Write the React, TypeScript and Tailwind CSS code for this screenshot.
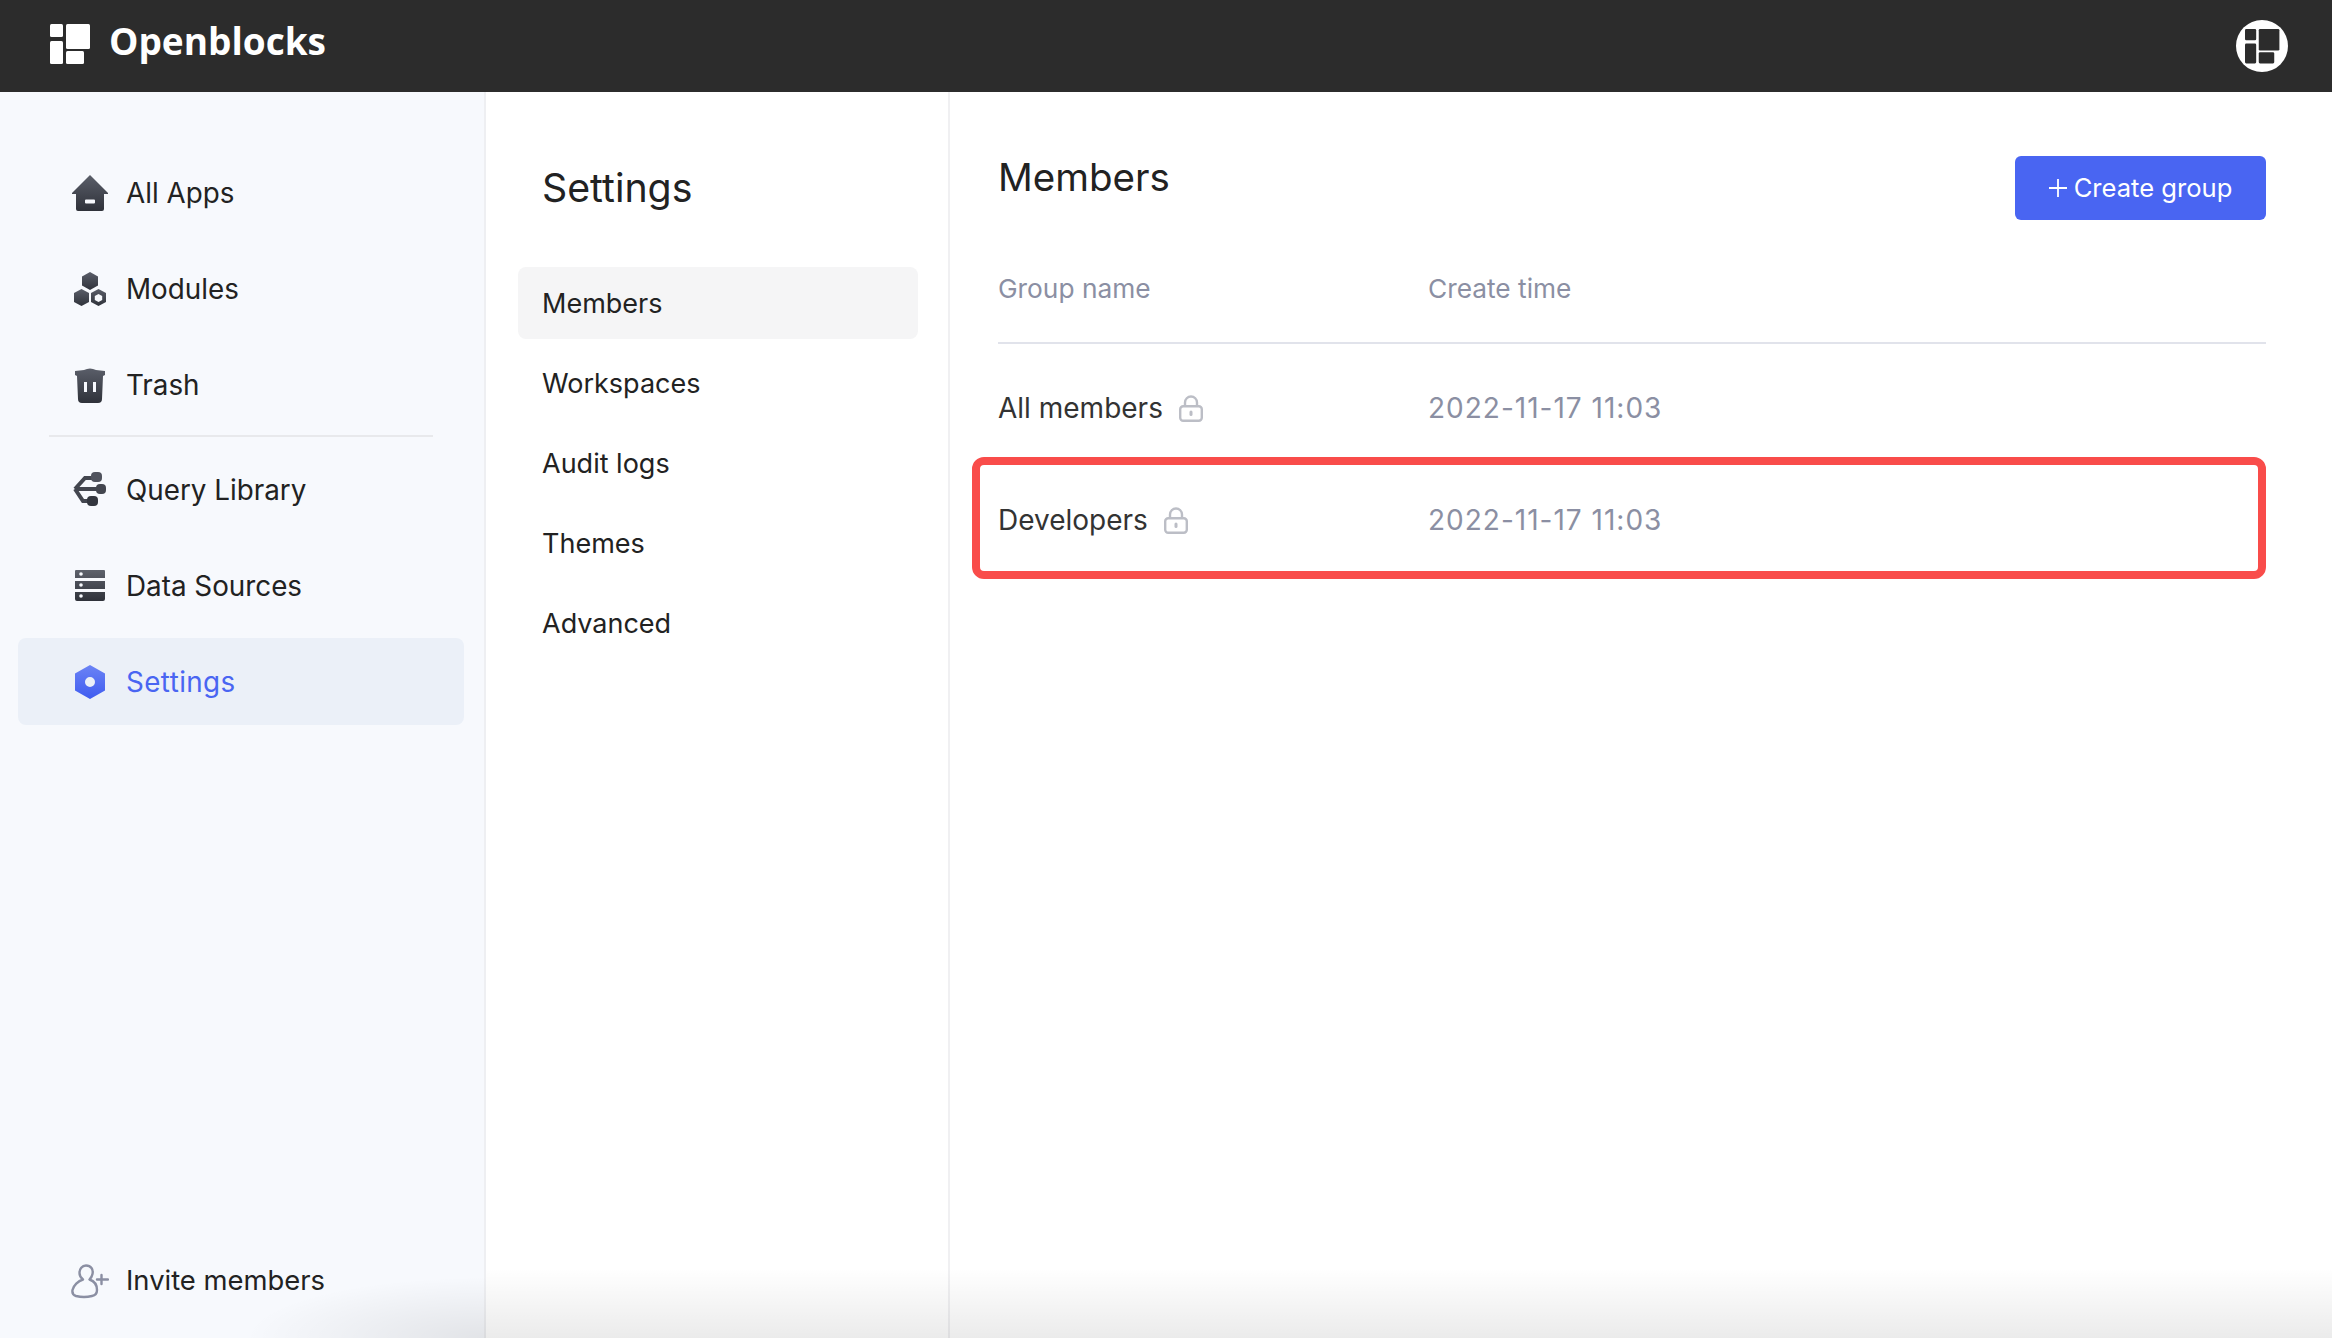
import React from 'react';

const sans = "font-['Inter',sans-serif]";

// Logo shape shared by the header brand and the avatar
const LogoBlocks = ({ fill }: { fill: string }) => (
  <>
    <rect x="0" y="0" width="13" height="13" rx="1.5" fill={fill} />
    <rect x="0" y="17" width="13" height="23" rx="1.5" fill={fill} />
    <rect x="16" y="0" width="24" height="25" rx="1.5" fill={fill} />
    <rect x="16" y="27" width="18" height="13" rx="1.5" fill={fill} />
  </>
);

const IconGradient = ({ id, from, to }: { id: string; from: string; to: string }) => (
  <defs>
    <linearGradient id={id} x1="0" y1="0" x2="0" y2="1">
      <stop offset="0" stopColor={from} />
      <stop offset="1" stopColor={to} />
    </linearGradient>
  </defs>
);

const HomeIcon = () => (
  <svg viewBox="0 0 36 36" className="w-9 h-9">
    <IconGradient id="g-home" from="#5a5e69" to="#2f323a" />
    <path
      fill="url(#g-home)"
      fillRule="evenodd"
      d="M18 0 L36 18 L36 19 L32 19 L32 34 Q32 36 30 36 L6 36 Q4 36 4 34 L4 19 L0 19 L0 18 Z M13 25.5 Q13 24.5 14 24.5 L22 24.5 Q23 24.5 23 25.5 L23 27.5 Q23 28.5 22 28.5 L14 28.5 Q13 28.5 13 27.5 Z"
    />
  </svg>
);

const ModulesIcon = () => (
  <svg viewBox="0 0 36 36" className="w-9 h-9">
    <IconGradient id="g-mod" from="#5a5e69" to="#2f323a" />
    <path fill="url(#g-mod)" d="M18 1 L26 5.5 L26 14.5 L18 19 L10 14.5 L10 5.5 Z" />
    <path fill="url(#g-mod)" d="M9.5 18 L17 22 L17 31 L9.5 35 L2 31 L2 22 Z" />
    <path
      fill="url(#g-mod)"
      fillRule="evenodd"
      d="M26.5 18 L34 22 L34 31 L26.5 35 L19 31 L19 22 Z M26.5 23 L22.8 25 L22.8 29 L26.5 31 L30.2 29 L30.2 25 Z"
    />
  </svg>
);

const TrashIcon = () => (
  <svg viewBox="0 0 36 36" className="w-9 h-9">
    <IconGradient id="g-trash" from="#5a5e69" to="#2f323a" />
    <path
      fill="url(#g-trash)"
      fillRule="evenodd"
      d="M12 3 Q18 0 24 3 L33 4 L33 8 L31 9 L30 32 Q30 36 26 36 L10 36 Q6 36 6 32 L5 9 L3 8 L3 4 Z M12 15 L12 25 L15 25 L15 15 Z M21 15 L21 25 L24 25 L24 15 Z"
    />
  </svg>
);

const QueryIcon = () => (
  <svg viewBox="0 0 36 36" className="w-9 h-9">
    <g stroke="#43464f" strokeWidth="4" fill="none">
      <path d="M3 17 L30 17" />
      <path d="M3 17 L13 6 L24 6" />
      <path d="M3 17 L11 29 L24 29" />
    </g>
    <rect x="19" y="0" width="11" height="10" rx="4" fill="#50535d" />
    <rect x="24" y="12" width="10" height="10" rx="4" fill="#43464f" />
    <rect x="15" y="24" width="11" height="10" rx="4" fill="#33363e" />
  </svg>
);

const DataIcon = () => (
  <svg viewBox="0 0 36 36" className="w-9 h-9">
    <IconGradient id="g-data" from="#5e626c" to="#2f323a" />
    <path
      fill="url(#g-data)"
      fillRule="evenodd"
      d="M4 2 L32 2 Q33 2 33 3 L33 10 L3 10 L3 3 Q3 2 4 2 Z M3 13 L33 13 L33 21 L3 21 Z M3 24 L33 24 L33 31 Q33 33 31 33 L5 33 Q3 33 3 31 Z"
    />
    <circle cx="9" cy="6" r="1.8" fill="#f7f9fd" />
    <circle cx="9" cy="17" r="1.8" fill="#f7f9fd" />
    <circle cx="9" cy="28" r="1.8" fill="#f7f9fd" />
  </svg>
);

const SettingsIcon = () => (
  <svg viewBox="0 0 36 36" className="w-9 h-9">
    <IconGradient id="g-set" from="#6b83f5" to="#3f5cf0" />
    <path
      fill="url(#g-set)"
      fillRule="evenodd"
      d="M18 1 L33 9.5 L33 26.5 L18 35 L3 26.5 L3 9.5 Z M18 13 A5 5 0 1 0 18 23 A5 5 0 1 0 18 13 Z"
    />
  </svg>
);

const InviteIcon = () => (
  <svg viewBox="0 0 38 35" className="w-[38px] h-[35px]" fill="none" stroke="#8b8fa3" strokeWidth="2.4">
    <path d="M15 1.5 C20 1.5 22.5 5.5 21.5 10 C21 12.5 19.5 14.5 18.5 15.5 C23 17 26 21 26 26 C26 29 24 31.5 21 32 C15 33.5 9 33 5 32 C2 31 1 29 1.5 26 C2.5 21.5 7 17 12 15.5 C10 14 8.5 11.5 8.5 9 C8.5 5 11 1.5 15 1.5 Z" strokeLinejoin="round" />
    <path d="M30.5 11 L30.5 20 M26 15.5 L37 15.5" strokeLinecap="round" />
  </svg>
);

const LockIcon = () => (
  <svg viewBox="0 0 24 27" className="w-6 h-[27px]" fill="none">
    <path d="M6 12 L6 7.5 A6 6 0 0 1 18 7.5 L18 12" stroke="#bcbec6" strokeWidth="2.4" />
    <rect x="1.2" y="11.2" width="21.6" height="14.6" rx="3" stroke="#bcbec6" strokeWidth="2.4" />
    <rect x="10.5" y="15.5" width="3" height="5.5" rx="1.5" fill="#bcbec6" />
  </svg>
);

const navTop = [
  { name: 'All Apps', icon: <HomeIcon /> },
  { name: 'Modules', icon: <ModulesIcon /> },
  { name: 'Trash', icon: <TrashIcon /> },
];

const navBottom = [
  { name: 'Query Library', icon: <QueryIcon /> },
  { name: 'Data Sources', icon: <DataIcon /> },
];

const NavRow = ({ name, icon, active }: { name: string; icon: React.ReactNode; active?: boolean }) => (
  <div className={`flex items-center h-[87px] mb-[9px] rounded-lg pl-[54px] gap-[18px] text-[27.8px] ${active ? 'bg-[#ebf0f8] text-[#4965f2] tracking-[0.4px]' : 'text-[#222222]'}`}>
    {icon}
    <span className="pt-0.5">{name}</span>
  </div>
);

const settingsItems = ['Members', 'Workspaces', 'Audit logs', 'Themes', 'Advanced'];

const groups = [
  { name: 'All members', time: '2022-11-17 11:03', marked: false },
  { name: 'Developers', time: '2022-11-17 11:03', marked: true },
];

const GroupRow = ({ name, time, marked }: { name: string; time: string; marked: boolean }) => (
  <div className="relative flex items-center h-[112px]">
    <div className="w-[430px] flex items-center gap-4 text-[28px] text-[#333333]">
      <span>{name}</span>
      <LockIcon />
    </div>
    <span className="text-[28px] tracking-[1px] text-[#8b8fa3]">{time}</span>
    {marked && (
      <div className="absolute left-[-26px] right-0 top-[-7px] h-[122px] border-[8px] border-[#f94c4a] rounded-xl" />
    )}
  </div>
);

const App: React.FC = () => {
  return (
    <div className={`relative h-[1338px] w-[2332px] overflow-hidden flex flex-col bg-white ${sans}`}>
      {/* Top bar */}
      <header className="h-[92px] shrink-0 bg-[#2c2c2c] flex items-center justify-between pl-[50px] pr-[44px]">
        <div className="flex items-center gap-[19px] -mt-1">
          <svg viewBox="0 0 40 40" className="w-10 h-10">
            <LogoBlocks fill="#ffffff" />
          </svg>
          <span className="font-['Open_Sans',sans-serif] font-bold text-[37px] leading-none text-white -mt-2">Openblocks</span>
        </div>
        <svg viewBox="0 0 52 52" className="w-[52px] h-[52px]">
          <circle cx="26" cy="26" r="26" fill="#ffffff" />
          <g transform="translate(9 9) scale(0.86)">
            <LogoBlocks fill="#2c2c2c" />
          </g>
        </svg>
      </header>

      <div className="flex flex-1 min-h-0">
        {/* App sidebar */}
        <aside className="w-[486px] shrink-0 bg-[#f7f9fd] border-r-2 border-[#eeeff2] flex flex-col pl-[18px] pr-5 pt-[57px] pb-[37px]">
          {navTop.map((item) => (
            <NavRow key={item.name} name={item.name} icon={item.icon} />
          ))}
          <div className="h-0.5 bg-[#e8e9ec] ml-[31px] -mt-[2px] mb-[9px] w-[384px]" />
          {navBottom.map((item) => (
            <NavRow key={item.name} name={item.name} icon={item.icon} />
          ))}
          <NavRow name="Settings" icon={<SettingsIcon />} active />
          <div className="mt-auto flex items-center pl-[53px] gap-[17px] text-[27.4px] text-[#222222] h-10">
            <InviteIcon />
            <span>Invite members</span>
          </div>
        </aside>

        {/* Settings sub nav */}
        <nav className="w-[464px] shrink-0 border-r-2 border-[#f0f0f2] pl-8 pr-[30px] pt-[66px]">
          <h2 className="pl-6 text-[39.3px] leading-[60px] text-[#222222]">Settings</h2>
          <div className="mt-[49px] flex flex-col gap-2">
            {settingsItems.map((item, i) => (
              <div key={item} className={`h-[72px] rounded-lg pl-6 pt-0.5 flex items-center text-[27px] text-[#222222] ${i === 0 ? 'bg-[#f5f5f6]' : ''}`}>
                {item}
              </div>
            ))}
          </div>
        </nav>

        {/* Members table */}
        <main className="flex-1 pl-12 pr-[66px] pt-[64px]">
          <div className="flex items-start justify-between">
            <h1 className="text-[38.5px] leading-[42px] text-[#222222]">Members</h1>
            <button className="w-[251px] h-16 rounded-md bg-[#4965f2] text-white text-[25.6px] flex items-center justify-center gap-[7px]">
              <svg viewBox="0 0 18 18" className="w-[18px] h-[18px]" stroke="#ffffff" strokeWidth="1.8">
                <path d="M9 0 L9 18 M0 9 L18 9" />
              </svg>
              Create group
            </button>
          </div>
          <div className="flex items-center h-[125px] pt-[17px] border-b-2 border-[#e1e3eb] text-[26.3px] text-[#8b8fa3] -mt-px">
            <span className="w-[430px]">Group name</span>
            <span>Create time</span>
          </div>
          <div className="pt-2">
            {groups.map((g) => (
              <GroupRow key={g.name} name={g.name} time={g.time} marked={g.marked} />
            ))}
          </div>
        </main>
      </div>

      {/* soft shadow from the capture along the bottom edge */}
      <div className="absolute left-[486px] right-0 bottom-0 h-[70px] bg-gradient-to-t from-[#00000014] to-transparent pointer-events-none" />
      <div className="absolute left-[250px] w-[236px] bottom-0 h-[60px] bg-[radial-gradient(ellipse_at_100%_100%,#00000016,transparent_72%)] pointer-events-none" />
    </div>
  );
};

export default App;
